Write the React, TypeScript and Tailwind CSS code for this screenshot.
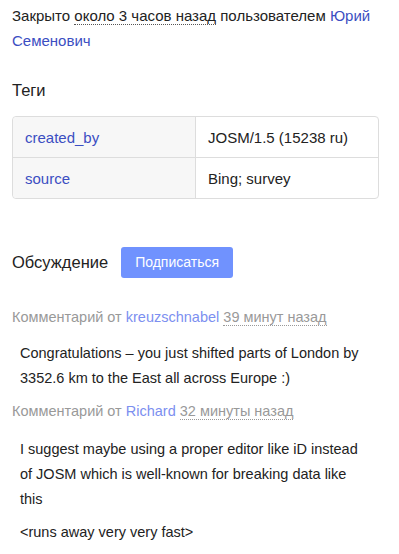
const font = { fontFamily: '"Liberation Sans", Arial, sans-serif' }

interface CommentProps {
    author: string;
    when: string;
    gap?: string;
    children: React.ReactNode;
}

const Comment = ({ author, when, gap = "pt-[11px]", children }: CommentProps) => {
    return (
        <div>
            <div className="text-[14.5px] leading-[25px] text-[#999]">
                Комментарий от <a className="text-[#7c8ff0]">{author}</a>{" "}
                <span className="border-b border-dotted border-[#999]">{when}</span>
            </div>
            <div className={`pl-2 w-[358px] text-[14.5px] leading-[25px] text-[#222] ${gap}`}>{children}</div>
        </div>
    )
}

export default function App() {
    return (
        <div className="w-[399px] h-[554px] bg-white overflow-hidden px-3 pt-[3px]" style={font}>
            <p className="text-[15px] leading-[25px] text-[#222]">
                Закрыто{" "}
                <span className="border-b border-dotted border-[#555]">около 3 часов назад</span>{" "}
                пользователем <a className="text-[#3b4ec2]">Юрий Семенович</a>
            </p>

            <h2 className="text-[16.5px] mt-[25px] text-[#222]">Теги</h2>

            <table className="mt-[13px] w-[367px] border-separate border-spacing-0 border border-[#ddd] rounded-[4px] text-[15px]">
                <tbody>
                    <tr className="h-[41px]">
                        <td className="w-[183px] bg-[#f7f7f7] pl-3 pt-[2px] text-[#3b4ec2] border-r border-b border-[#ddd] rounded-tl-[4px]">created_by</td>
                        <td className="pl-3 pt-[2px] text-[#222] border-b border-[#ddd]">JOSM/1.5 (15238 ru)</td>
                    </tr>
                    <tr className="h-[40px]">
                        <td className="bg-[#f7f7f7] pl-3 pt-[2px] text-[#3b4ec2] border-r border-[#ddd] rounded-bl-[4px]">source</td>
                        <td className="pl-3 pt-[2px] text-[#222]">Bing; survey</td>
                    </tr>
                </tbody>
            </table>

            <div className="flex items-center gap-[13px] mt-[48px]">
                <h2 className="text-[16.5px] text-[#222]">Обсуждение</h2>
                <button className="bg-[#7092fe] text-white text-[14px] rounded-[3px] h-[31px] px-[14px]">Подписаться</button>
            </div>

            <div className="mt-[27px] flex flex-col gap-[8px]">
                <Comment author="kreuzschnabel" when="39 минут назад">
                    <p>Congratulations – you just shifted parts of London by 3352.6 km to the East all across Europe :)</p>
                </Comment>
                <Comment author="Richard" when="32 минуты назад" gap="pt-[13px]">
                    <p>I suggest maybe using a proper editor like iD instead of JOSM which is well-known for breaking data like this</p>
                    <p className="mt-[8px]">&lt;runs away very very fast&gt;</p>
                </Comment>
            </div>
        </div>
    )
}
